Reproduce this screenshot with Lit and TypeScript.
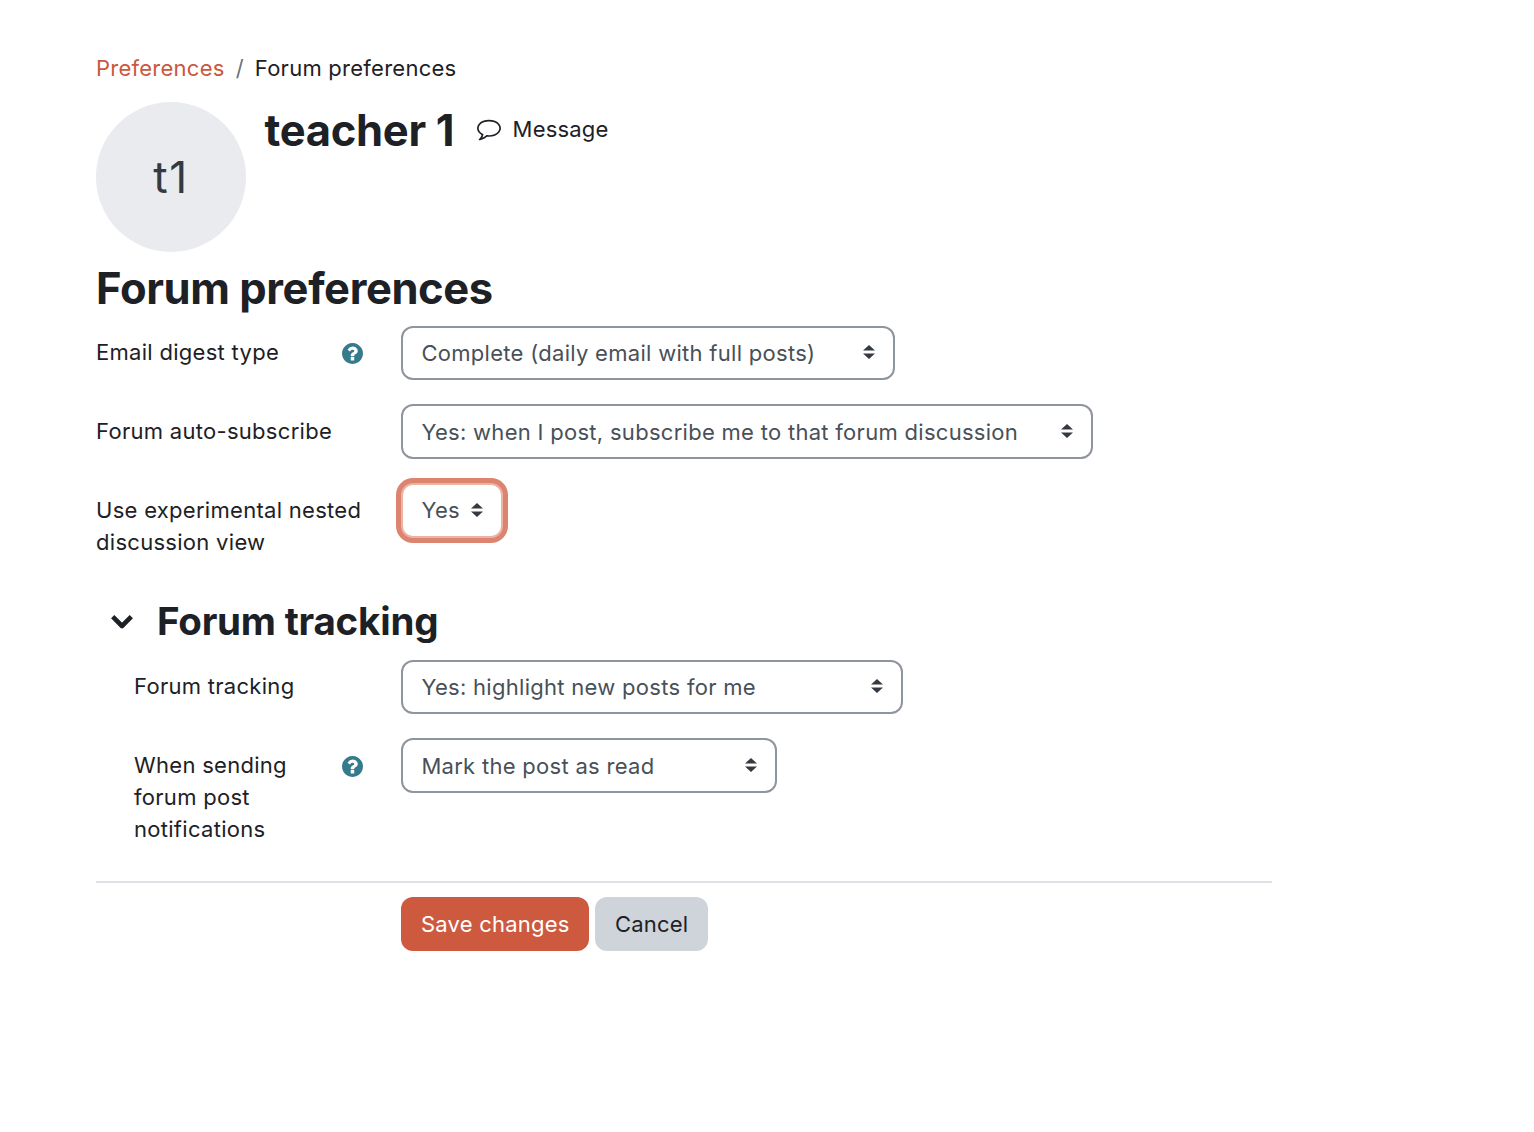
import {html, css, svg, LitElement, nothing} from "lit";
import {customElement, property} from "lit/decorators.js";
import {classMap} from "lit/directives/class-map.js";

const commentIcon = svg`<path d="M896 384q-204 0-381.5 69.5t-282 187.5-104.5 255q0 112 71.5 213.5t201.5 175.5l87 50-27 96q-24 91-70 172 152-63 275-171l43-38 57 6q69 8 130 8 204 0 381.5-69.5t282-187.5 104.5-255-104.5-255-282-187.5-381.5-69.5zm896 512q0 174-120 321.5t-326 233-450 85.5q-70 0-145-8-198 175-460 242-49 14-114 22h-5q-15 0-27-10.5t-16-27.5v-1q-3-4-.5-12t2-10 4.5-9.5l6-9 7-8.5 8-9q7-8 31-34.5t34.5-38 31-39.5 32.5-51 27-59 26-76q-157-89-247.5-220t-90.5-281q0-174 120-321.5t326-233 450-85.5 450 85.5 326 233 120 321.5z"/>`;

const helpIcon = svg`<path d="M1024 1376v-192q0-14-9-23t-23-9h-192q-14 0-23 9t-9 23v192q0 14 9 23t23 9h192q14 0 23-9t9-23zm256-672q0-88-55.5-163t-138.5-116-170-41q-243 0-371 213-15 24 8 42l132 100q7 6 19 6 16 0 25-12 53-68 86-92 34-24 86-24 48 0 85.5 26t37.5 59q0 38-20 61t-68 45q-63 28-115.5 86.5t-52.5 125.5v36q0 14 9 23t23 9h192q14 0 23-9t9-23q0-19 21.5-49.5t54.5-49.5q32-18 49-28.5t46-35 44.5-48 28-60.5 12.5-81zm384 192q0 209-103 385.5t-279.5 279.5-385.5 103-385.5-103-279.5-279.5-103-385.5 103-385.5 279.5-279.5 385.5-103 385.5 103 279.5 279.5 103 385.5z"/>`;

@customElement("preference-row")
export class PreferenceRow extends LitElement {
  static styles = css`
      :host {
        display: flex;
        align-items: flex-start;
        min-height: 54.5px;
      }
      .label {
        display: flex;
        box-sizing: border-box;
        width: 305px;
        padding-top: 10.5px;
        padding-right: 38px;
        justify-content: space-between;
      }
      .indented {
        padding-left: 38px;
      }
      .text {
        max-width: 270px;
        margin-right: -10px;
        line-height: 32px;
      }
      .indented .text {
        max-width: 175px;
      }
      .help {
        flex: none;
        width: 21px;
        height: 21px;
        margin-top: 6.7px;
        fill: #357b8c;
      }
      .select {
        display: flex;
        box-sizing: border-box;
        height: 54.5px;
        padding: 0 18px 0 18.4px;
        align-items: center;
        justify-content: space-between;
        border: 2px solid #8f959e;
        border-radius: 12px;
        background: #fff;
        color: #495057;
        white-space: nowrap;
      }
      .focused {
        border-color: #ecb3a4;
        box-shadow: 0 0 0 5px #dc8470;
      }
      .arrows {
        width: 12px;
        height: 14px;
        margin-bottom: 1.6px;
        fill: #343a40;
      }
    `;

  @property() label = "";
  @property() value = "";
  @property({type: Number}) width = 100;
  @property({type: Boolean}) help = false;
  @property({type: Boolean}) indented = false;
  @property({type: Boolean}) focused = false;

  render() {
    return html`
      <div class=${classMap({label: true, indented: this.indented})}>
        <span class="text">${this.label}</span>
        ${this.help ? html`<svg class="help" viewBox="128 128 1536 1536">${helpIcon}</svg>` : nothing}
      </div>
      <div class=${classMap({select: true, focused: this.focused})} style="width: ${this.width}px">
        <span>${this.value}</span>
        <svg class="arrows" viewBox="0 0 4 5" preserveAspectRatio="none"><path d="M2 0L0 2h4zm0 5L0 3h4z"/></svg>
      </div>
    `;
  }
}

@customElement("app-root")
export class AppRoot extends LitElement {
  static styles = css`
      :host {
        display: block;
        box-sizing: border-box;
        width: 1272px;
        padding: 52px 0 0 96px;
        color: #1d2125;
        font: 400 22px/32px Inter, "Liberation Sans", sans-serif;
        letter-spacing: 0.29px;
      }
      .breadcrumb {
        display: flex;
        height: 50px;
        letter-spacing: 0.25px;
      }
      .breadcrumb a {
        color: #c9583e;
      }
      .breadcrumb .separator {
        padding: 0 11px;
        color: #6a737b;
      }
      .profile {
        display: flex;
        height: 150px;
      }
      .avatar {
        display: flex;
        width: 150px;
        height: 150px;
        margin-right: 18.5px;
        align-items: center;
        justify-content: center;
        border-radius: 50%;
        background: #e9ebef;
        color: #343a40;
        font-size: 44px;
        letter-spacing: 1.5px;
      }
      h1, h2, h3 {
        margin: 0;
        font-weight: 700;
        white-space: nowrap;
      }
      h1, h2 {
        font-size: 43.5px;
        line-height: 54px;
        letter-spacing: -0.4px;
      }
      h1 {
        padding-top: 1px;
        letter-spacing: -0.3px;
      }
      h2 {
        padding: 9px 0 10.8px;
      }
      .message {
        display: flex;
        height: 54px;
        margin-left: 22.3px;
        align-items: center;
        letter-spacing: 0.2px;
      }
      .message svg {
        width: 24px;
        height: 24px;
        margin-top: 1px;
        margin-right: 12px;
        fill: #1d2125;
      }
      .rows {
        display: flex;
        flex-direction: column;
        gap: 24.2px;
      }
      .section {
        display: flex;
        height: 54px;
        padding: 36px 0 12px 15px;
        align-items: center;
      }
      .section svg {
        width: 22px;
        height: 16px;
        margin-top: 3px;
        margin-right: 24px;
        fill: none;
        stroke: #1d2125;
        stroke-width: 4.6;
        stroke-linejoin: round;
      }
      h3 {
        font-size: 38.5px;
        letter-spacing: -0.22px;
      }
      .actions {
        display: flex;
        margin-top: 36px;
        padding: 14px 0 0 305px;
        gap: 6px;
        border-top: 2px solid #dee2e6;
      }
      .button {
        height: 54px;
        padding: 0 20px;
        border: 0;
        border-radius: 12px;
        background: #ced4da;
        color: #1d2125;
        font: inherit;
        letter-spacing: 0.23px;
        white-space: nowrap;
      }
      .primary {
        padding-right: 19.2px;
        background: #cd5a3f;
        color: #fff;
      }
    `;

  render() {
    return html`
      <nav class="breadcrumb">
        <a>Preferences</a>
        <span class="separator">/</span>
        <span>Forum preferences</span>
      </nav>
      <header class="profile">
        <div class="avatar">t1</div>
        <h1>teacher 1</h1>
        <div class="message">
          <svg viewBox="0 128 1792 1792">${commentIcon}</svg>
          <span>Message</span>
        </div>
      </header>
      <h2>Forum preferences</h2>
      <div class="rows">
        <preference-row label="Email digest type" help value="Complete (daily email with full posts)" width="494"></preference-row>
        <preference-row label="Forum auto-subscribe" value="Yes: when I post, subscribe me to that forum discussion" width="692"></preference-row>
        <preference-row label="Use experimental nested discussion view" value="Yes" width="102" focused></preference-row>
      </div>
      <div class="section">
        <svg viewBox="0 0 22 16"><path d="M1.7 2.7L11 12L20.3 2.7"/></svg>
        <h3>Forum tracking</h3>
      </div>
      <div class="rows">
        <preference-row label="Forum tracking" indented value="Yes: highlight new posts for me" width="502"></preference-row>
        <preference-row label="When sending forum post notifications" indented help value="Mark the post as read" width="376"></preference-row>
      </div>
      <div class="actions">
        <button class="button primary">Save changes</button>
        <button class="button">Cancel</button>
      </div>
    `;
  }
}
